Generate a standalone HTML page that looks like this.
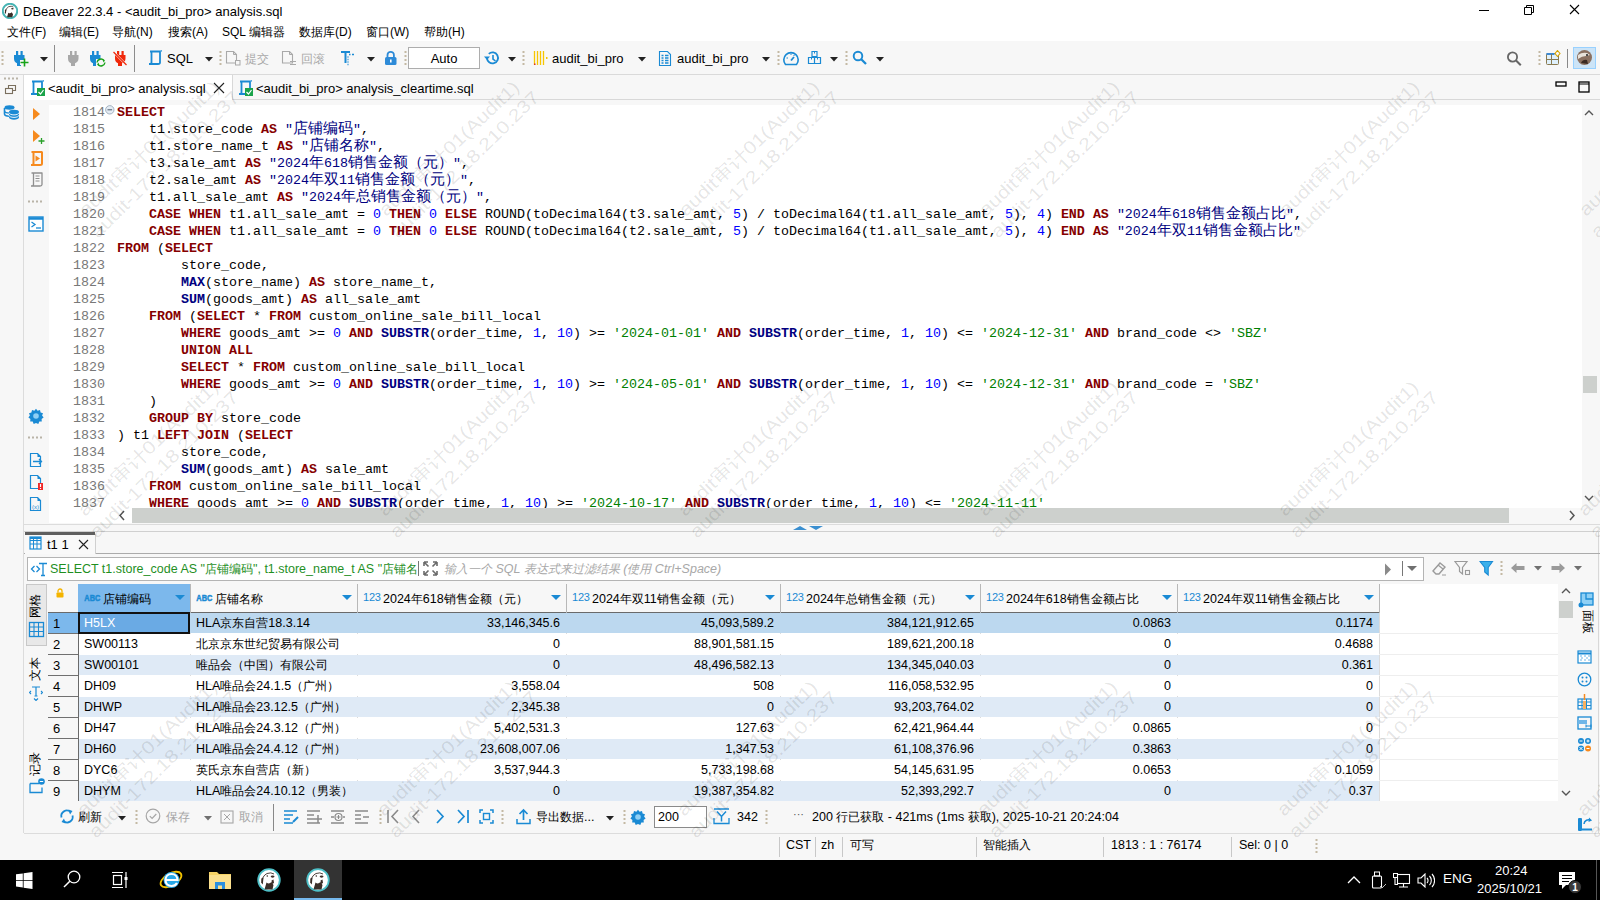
<!DOCTYPE html><html><head><meta charset="utf-8"><style>
*{margin:0;padding:0;box-sizing:border-box}
html,body{width:1600px;height:900px;overflow:hidden;background:#f7f7f7;font-family:"Liberation Sans",sans-serif;font-size:12px;color:#000}
.a{position:absolute}
.ui{font-family:"Liberation Sans",sans-serif;font-size:12px;white-space:nowrap}
.code{font-family:"Liberation Mono",monospace;font-size:13.33px;line-height:17px;white-space:pre;color:#000}
.kw{color:#850000;font-weight:bold}
.fn{color:#000080;font-weight:bold}
.num{color:#0000ff}
.str{color:#008000}
.dq{color:#000080}
.cj{font-size:15px;line-height:0;font-family:"Liberation Sans",sans-serif}
.ln{color:#787878}
.uc{font-size:12px;line-height:0}
.vl{position:absolute;width:1px}
.hl{position:absolute;height:1px}
</style></head><body><div class="a " style="left:0px;top:0px;width:1600px;height:41px;background:#fff"></div><div class="a ui" style="left:23px;top:4px;font-size:13px">DBeaver 22.3.4 - &lt;audit_bi_pro&gt; analysis.sql</div><svg class="a" style="left:2px;top:3px;" width="16" height="16" viewBox="0 0 16 16"><g transform="scale(0.667)"><circle cx="12" cy="12" r="10.8" fill="#fff" stroke="#48b4b4" stroke-width="3"/><path d="M7.5 21.5L9.5 14.5Q12 16.5 14.5 14L16.5 17 15.5 21.5Z" fill="#3a2e28"/><path d="M4.8 15Q5 8 10 5.5Q14 4 17 6" fill="none" stroke="#3a2e28" stroke-width="1.2"/><path d="M4.3 10.5L6.5 9.5 5.8 16.5 4.5 15z" fill="#3a2e28"/><ellipse cx="15.6" cy="8.6" rx="1.9" ry="1.1" fill="#3a2e28"/></g></svg><svg class="a" style="left:1470px;top:0px" width="130" height="22"><path d="M9 10.5h10" stroke="#000" stroke-width="1"/><path d="M54.5 7.5h7v7h-7z M56.5 7.5v-2h7v7h-2" fill="none" stroke="#000" stroke-width="1"/><path d="M100 5l9 9M109 5l-9 9" stroke="#000" stroke-width="1.1"/></svg><div class="a ui" style="left:7px;top:25px;font-size:12px"><span class="uc">文件</span>(F)</div><div class="a ui" style="left:59px;top:25px;font-size:12px"><span class="uc">编辑</span>(E)</div><div class="a ui" style="left:112px;top:25px;font-size:12px"><span class="uc">导航</span>(N)</div><div class="a ui" style="left:168px;top:25px;font-size:12px"><span class="uc">搜索</span>(A)</div><div class="a ui" style="left:222px;top:25px;font-size:12px">SQL <span class="uc">编辑器</span></div><div class="a ui" style="left:299px;top:25px;font-size:12px"><span class="uc">数据库</span>(D)</div><div class="a ui" style="left:366px;top:25px;font-size:12px"><span class="uc">窗口</span>(W)</div><div class="a ui" style="left:424px;top:25px;font-size:12px"><span class="uc">帮助</span>(H)</div><div class="a " style="left:0px;top:41px;width:1600px;height:33px;background:#f7f7f7"></div><div class="a " style="left:0px;top:74px;width:1600px;height:1px;background:#dadada"></div><svg class="a" style="left:1px;top:51px;" width="3" height="15" viewBox="0 0 3 15"><rect x="0.5" y="0" width="2" height="2" fill="#c4b9a4"/><rect x="0.5" y="4" width="2" height="2" fill="#c4b9a4"/><rect x="0.5" y="8" width="2" height="2" fill="#c4b9a4"/><rect x="0.5" y="12" width="2" height="2" fill="#c4b9a4"/></svg><svg class="a" style="left:13px;top:50px;" width="17" height="17" viewBox="0 0 17 17"><g transform="translate(0,1)"><rect x="3" y="0" width="2.2" height="4" fill="#1a8ad4"/><rect x="7.5" y="0" width="2.2" height="4" fill="#1a8ad4"/><path d="M1 4h10.5v3.5c0 2.5-1.5 4-3.5 4.8V15h-4v-2.7C2 11.5 1 10 1 7.5z" fill="#1a8ad4"/></g><rect x="7" y="10" width="9" height="5" fill="#f7f7f7"/><path d="M11.5 8.5v8M7.5 12.5h8" stroke="#18a318" stroke-width="1.6"/></svg><svg class="a" style="left:40px;top:57px;" width="8" height="5" viewBox="0 0 8 5"><path d="M0 0h8L4 4.5z" fill="#222"/></svg><div class="a " style="left:54px;top:45px;width:1px;height:27px;background:#8c8c8c"></div><svg class="a" style="left:67px;top:51px;" width="13" height="16" viewBox="0 0 13 16"><g transform="translate(0,0)"><rect x="3" y="0" width="2.2" height="4" fill="#a8a8a8"/><rect x="7.5" y="0" width="2.2" height="4" fill="#a8a8a8"/><path d="M1 4h10.5v3.5c0 2.5-1.5 4-3.5 4.8V15h-4v-2.7C2 11.5 1 10 1 7.5z" fill="#a8a8a8"/></g></svg><svg class="a" style="left:89px;top:50px;" width="17" height="17" viewBox="0 0 17 17"><g transform="translate(0,1)"><rect x="3" y="0" width="2.2" height="4" fill="#1a8ad4"/><rect x="7.5" y="0" width="2.2" height="4" fill="#1a8ad4"/><path d="M1 4h10.5v3.5c0 2.5-1.5 4-3.5 4.8V15h-4v-2.7C2 11.5 1 10 1 7.5z" fill="#1a8ad4"/></g><rect x="7" y="9" width="10" height="8" fill="#f7f7f7"/><path d="M8 12.5a4 4 0 0 1 7-2M16 12.5a4 4 0 0 1-7 2" fill="none" stroke="#18a318" stroke-width="1.4"/><path d="M13.5 9l2.5 1.5-1.5 2z M10.5 16l-2.5-1.5 1.5-2z" fill="#18a318"/></svg><svg class="a" style="left:113px;top:50px;" width="15" height="17" viewBox="0 0 15 17"><g transform="translate(1,1)"><rect x="3" y="0" width="2.2" height="4" fill="#f0280a"/><rect x="7.5" y="0" width="2.2" height="4" fill="#f0280a"/><path d="M1 4h10.5v3.5c0 2.5-1.5 4-3.5 4.8V15h-4v-2.7C2 11.5 1 10 1 7.5z" fill="#f0280a"/></g><path d="M0.5 2l13 13" stroke="#f7f7f7" stroke-width="2.2"/><path d="M0.5 2l13 13" stroke="#f0280a" stroke-width="1.2"/></svg><div class="a " style="left:134px;top:45px;width:1px;height:27px;background:#8c8c8c"></div><svg class="a" style="left:147px;top:50px;" width="16" height="16" viewBox="0 0 16 16"><path d="M3 1.5h10.5M4.5 1.5v11c0 1-1 1.5-2.5 1.5h9c1 0 2-.5 2-1.5v-11" fill="none" stroke="#1a8ad4" stroke-width="1.8"/><path d="M13.5 1.5l1.2-1" stroke="#1a8ad4" stroke-width="1.4"/></svg><div class="a ui" style="left:167px;top:51px;font-size:13px">SQL</div><svg class="a" style="left:205px;top:57px;" width="8" height="5" viewBox="0 0 8 5"><path d="M0 0h8L4 4.5z" fill="#222"/></svg><svg class="a" style="left:219px;top:51px;" width="3" height="15" viewBox="0 0 3 15"><rect x="0.5" y="0" width="2" height="2" fill="#c4b9a4"/><rect x="0.5" y="4" width="2" height="2" fill="#c4b9a4"/><rect x="0.5" y="8" width="2" height="2" fill="#c4b9a4"/><rect x="0.5" y="12" width="2" height="2" fill="#c4b9a4"/></svg><svg class="a" style="left:225px;top:50px;" width="16" height="17" viewBox="0 0 16 17"><path d="M1.5 1.5h7l3 3v8.5h-10z" fill="none" stroke="#a9a9a9" stroke-width="1.1"/><path d="M8.5 1.5v3h3" fill="none" stroke="#a9a9a9" stroke-width="1"/><rect x="10.5" y="10.5" width="4.5" height="4.5" fill="#f7f7f7" stroke="#a9a9a9"/></svg><div class="a ui" style="left:245px;top:51px;font-size:13px;color:#a9a9a9"><span class="uc">提交</span></div><svg class="a" style="left:281px;top:50px;" width="16" height="17" viewBox="0 0 16 17"><path d="M1.5 1.5h7l3 3v8.5h-10z" fill="none" stroke="#a9a9a9" stroke-width="1.1"/><path d="M8.5 1.5v3h3" fill="none" stroke="#a9a9a9" stroke-width="1"/><path d="M9 11.5h6M9 14.5h6" stroke="#a9a9a9" stroke-width="1"/></svg><div class="a ui" style="left:301px;top:51px;font-size:13px;color:#a9a9a9"><span class="uc">回滚</span></div><svg class="a" style="left:340px;top:50px;" width="17" height="17" viewBox="0 0 17 17"><path d="M1 2h9M5.5 2v11" stroke="#1a8ad4" stroke-width="2"/><path d="M9 4.5h1.5M12 4.5h2M7.5 7h1M7.5 9.5h1M7.5 12h1M7.5 14.5h1" stroke="#1a8ad4" stroke-width="1.5"/></svg><svg class="a" style="left:367px;top:57px;" width="8" height="5" viewBox="0 0 8 5"><path d="M0 0h8L4 4.5z" fill="#222"/></svg><svg class="a" style="left:384px;top:50px;" width="14" height="17" viewBox="0 0 14 17"><path d="M3.5 7V5a3.2 3.2 0 0 1 6.4 0v2" fill="none" stroke="#2e8bd8" stroke-width="1.8"/><rect x="1" y="7" width="11.5" height="8" rx="1.5" fill="#2e8bd8"/><rect x="6" y="9.5" width="1.6" height="3" fill="#fff"/></svg><svg class="a" style="left:404px;top:51px;" width="3" height="15" viewBox="0 0 3 15"><rect x="0.5" y="0" width="2" height="2" fill="#c4b9a4"/><rect x="0.5" y="4" width="2" height="2" fill="#c4b9a4"/><rect x="0.5" y="8" width="2" height="2" fill="#c4b9a4"/><rect x="0.5" y="12" width="2" height="2" fill="#c4b9a4"/></svg><div class="a " style="left:408px;top:47px;width:72px;height:22px;background:#fff;border:1px solid #adadad"></div><div class="a ui" style="left:408px;top:51px;font-size:13px;width:72px;text-align:center">Auto</div><svg class="a" style="left:483px;top:50px;" width="18" height="17" viewBox="0 0 18 17"><path d="M4 8a5.5 5.5 0 1 0 1.8-4.2" fill="none" stroke="#1a8ad4" stroke-width="1.8"/><path d="M1 6.5l3 3.5 3-3.5z" fill="#1a8ad4"/><path d="M10 5v4l2.5 2" fill="none" stroke="#1a8ad4" stroke-width="1.6"/></svg><svg class="a" style="left:508px;top:57px;" width="8" height="5" viewBox="0 0 8 5"><path d="M0 0h8L4 4.5z" fill="#222"/></svg><svg class="a" style="left:522px;top:51px;" width="3" height="15" viewBox="0 0 3 15"><rect x="0.5" y="0" width="2" height="2" fill="#c4b9a4"/><rect x="0.5" y="4" width="2" height="2" fill="#c4b9a4"/><rect x="0.5" y="8" width="2" height="2" fill="#c4b9a4"/><rect x="0.5" y="12" width="2" height="2" fill="#c4b9a4"/></svg><svg class="a" style="left:532px;top:50px;" width="17" height="17" viewBox="0 0 17 17"><path d="M2.5 1v14M5.5 1v14M8.5 1v14M11.5 1v14" stroke="#f7c600" stroke-width="1.3"/><rect x="2" y="13.5" width="1.5" height="1.5" fill="#e0302a"/><rect x="14" y="7" width="1.5" height="2" fill="#f7c600"/></svg><div class="a ui" style="left:552px;top:51px;font-size:13px">audit_bi_pro</div><svg class="a" style="left:638px;top:57px;" width="8" height="5" viewBox="0 0 8 5"><path d="M0 0h8L4 4.5z" fill="#222"/></svg><svg class="a" style="left:658px;top:50px;" width="15" height="17" viewBox="0 0 15 17"><path d="M1.5 1.5h8l3 3v11h-11z" fill="none" stroke="#1a8ad4" stroke-width="1.1"/><path d="M3.5 5.5h2M3.5 8h2M3.5 10.5h2M3.5 13h2M7 5.5h3.5M7 8h3.5M7 10.5h3.5M7 13h3.5" stroke="#1a8ad4" stroke-width="1.4"/></svg><div class="a ui" style="left:677px;top:51px;font-size:13px">audit_bi_pro</div><svg class="a" style="left:762px;top:57px;" width="8" height="5" viewBox="0 0 8 5"><path d="M0 0h8L4 4.5z" fill="#222"/></svg><svg class="a" style="left:777px;top:51px;" width="3" height="15" viewBox="0 0 3 15"><rect x="0.5" y="0" width="2" height="2" fill="#c4b9a4"/><rect x="0.5" y="4" width="2" height="2" fill="#c4b9a4"/><rect x="0.5" y="8" width="2" height="2" fill="#c4b9a4"/><rect x="0.5" y="12" width="2" height="2" fill="#c4b9a4"/></svg><svg class="a" style="left:782px;top:50px;" width="18" height="16" viewBox="0 0 18 16"><path d="M3.5 14.5A7.2 7.2 0 1 1 14.5 14.5Z" fill="none" stroke="#1a8ad4" stroke-width="1.6"/><path d="M9 10.5l3-3.5" stroke="#1a8ad4" stroke-width="1.8"/><path d="M4.5 8h1.5M9 3.5v1.5M12.5 5l-1 1" stroke="#1a8ad4" stroke-width="1"/></svg><svg class="a" style="left:807px;top:50px;" width="15" height="16" viewBox="0 0 15 16"><path d="M5 1.5h5v5H5zM1.5 7.5h6v6h-6zM7.5 7.5h6v6h-6z" fill="none" stroke="#1a8ad4" stroke-width="1.2"/><path d="M7.5 1.5v2M4.5 7.5v2M10.5 7.5v2" stroke="#1a8ad4" stroke-width="1"/></svg><svg class="a" style="left:830px;top:57px;" width="8" height="5" viewBox="0 0 8 5"><path d="M0 0h8L4 4.5z" fill="#222"/></svg><svg class="a" style="left:845px;top:51px;" width="3" height="15" viewBox="0 0 3 15"><rect x="0.5" y="0" width="2" height="2" fill="#c4b9a4"/><rect x="0.5" y="4" width="2" height="2" fill="#c4b9a4"/><rect x="0.5" y="8" width="2" height="2" fill="#c4b9a4"/><rect x="0.5" y="12" width="2" height="2" fill="#c4b9a4"/></svg><svg class="a" style="left:852px;top:50px;" width="16" height="16" viewBox="0 0 16 16"><circle cx="6" cy="6" r="4.3" fill="none" stroke="#1a8ad4" stroke-width="1.9"/><path d="M9 9l5 5" stroke="#1a8ad4" stroke-width="2.3"/></svg><svg class="a" style="left:876px;top:57px;" width="8" height="5" viewBox="0 0 8 5"><path d="M0 0h8L4 4.5z" fill="#222"/></svg><svg class="a" style="left:1505px;top:50px;" width="18" height="18" viewBox="0 0 18 18"><circle cx="7.5" cy="7" r="4.6" fill="none" stroke="#666" stroke-width="1.8"/><path d="M10.8 10.3l5 5" stroke="#666" stroke-width="2"/></svg><svg class="a" style="left:1538px;top:51px;" width="3" height="15" viewBox="0 0 3 15"><rect x="0.5" y="0" width="2" height="2" fill="#c4b9a4"/><rect x="0.5" y="4" width="2" height="2" fill="#c4b9a4"/><rect x="0.5" y="8" width="2" height="2" fill="#c4b9a4"/><rect x="0.5" y="12" width="2" height="2" fill="#c4b9a4"/></svg><svg class="a" style="left:1545px;top:50px;" width="17" height="17" viewBox="0 0 17 17"><rect x="1.5" y="3.5" width="12" height="11" rx="1" fill="#dff0fb" stroke="#8a7a50" stroke-width="1"/><path d="M1.5 4h8" stroke="#3d8ad4" stroke-width="2"/><path d="M6.5 4v10.5M1.5 9.5h12" stroke="#8a7a50" stroke-width="1"/><path d="M12.5 0.5l2.5 3-2.5 3-2.5-3z" fill="#f7f7f7" stroke="#d6a400" stroke-width="1.1"/></svg><div class="a " style="left:1567px;top:49px;width:1px;height:19px;background:#888"></div><div class="a " style="left:1573px;top:47px;width:23px;height:22px;background:#cce4f7;border:1px solid #99d1ff"></div><svg class="a" style="left:1576px;top:49px;" width="17" height="17" viewBox="0 0 17 17"><circle cx="8.5" cy="8.5" r="7.5" fill="#8a7060"/><path d="M2 6q4-3 9-2l3 2-4 1q-4 0-8 3z" fill="#e8e2da"/><circle cx="11" cy="6" r="1" fill="#222"/><path d="M5 14q2-4 6-3l1 4z" fill="#3a2a22"/></svg><div class="a " style="left:0px;top:75px;width:23px;height:760px;background:#f7f7f7"></div><div class="a " style="left:23px;top:75px;width:1px;height:758px;background:#dcdcdc"></div><svg class="a" style="left:4px;top:77px;" width="16" height="3" viewBox="0 0 16 3"><rect x="0" y="0.5" width="2" height="2" fill="#b9b4a8"/><rect x="4" y="0.5" width="2" height="2" fill="#b9b4a8"/><rect x="8" y="0.5" width="2" height="2" fill="#b9b4a8"/><rect x="12" y="0.5" width="2" height="2" fill="#b9b4a8"/></svg><svg class="a" style="left:4px;top:83px;" width="14" height="12" viewBox="0 0 14 12"><rect x="1.5" y="5.5" width="7" height="5" fill="none" stroke="#7a6f5e" stroke-width="1.1"/><path d="M4.5 5.5v-3h7v5h-3" fill="none" stroke="#7a6f5e" stroke-width="1.1"/></svg><svg class="a" style="left:3px;top:104px;" width="17" height="16" viewBox="0 0 17 16"><ellipse cx="6.5" cy="3.5" rx="5" ry="2.2" fill="#1a8ad4"/><path d="M1.5 4v6c0 1.2 2.2 2.2 5 2.2" fill="none" stroke="#1a8ad4" stroke-width="1.6"/><path d="M1.5 6.8c0 1.2 2.2 2.2 5 2.2" fill="none" stroke="#1a8ad4" stroke-width="1.3"/><ellipse cx="11" cy="8" rx="5" ry="2.2" fill="#1a8ad4"/><path d="M6 8.5v5c0 1.2 2.2 2.2 5 2.2s5-1 5-2.2v-5" fill="#1a8ad4"/><path d="M6 11.2c0 1.2 2.2 2.2 5 2.2s5-1 5-2.2" fill="none" stroke="#fff" stroke-width="0.9"/><path d="M6 8.7c0 1.2 2.2 2.2 5 2.2s5-1 5-2.2" fill="none" stroke="#fff" stroke-width="0.9"/></svg><div class="a " style="left:24px;top:75px;width:1576px;height:25px;background:#f7f7f7"></div><div class="a " style="left:24px;top:99px;width:1576px;height:1px;background:#d8d8d8"></div><div class="a " style="left:24px;top:75px;width:208px;height:25px;background:#fff"></div><div class="a " style="left:232px;top:75px;width:1px;height:25px;background:#d8d8d8"></div><div class="a ui" style="left:48px;top:81px;font-size:13px">&lt;audit_bi_pro&gt; analysis.sql</div><div class="a ui" style="left:256px;top:81px;font-size:13px">&lt;audit_bi_pro&gt; analysis_cleartime.sql</div><svg class="a" style="left:29px;top:80px;" width="17" height="17" viewBox="0 0 17 17"><path d="M3 1.5h10.5M4.5 1.5v11c0 1-1 1.5-2.5 1.5h9c1 0 2-.5 2-1.5v-11" fill="none" stroke="#1a8ad4" stroke-width="1.8"/><path d="M13.5 1.5l1.2-1" stroke="#1a8ad4" stroke-width="1.4"/><rect x="8" y="8" width="8" height="8" fill="#1aa34a"/><path d="M9.5 12l2 2 3-4" fill="none" stroke="#fff" stroke-width="1.2"/></svg><svg class="a" style="left:237px;top:80px;" width="17" height="17" viewBox="0 0 17 17"><path d="M3 1.5h10.5M4.5 1.5v11c0 1-1 1.5-2.5 1.5h9c1 0 2-.5 2-1.5v-11" fill="none" stroke="#1a8ad4" stroke-width="1.8"/><path d="M13.5 1.5l1.2-1" stroke="#1a8ad4" stroke-width="1.4"/><rect x="8" y="8" width="8" height="8" fill="#1aa34a"/><path d="M9.5 12l2 2 3-4" fill="none" stroke="#fff" stroke-width="1.2"/></svg><svg class="a" style="left:213px;top:82px;" width="12" height="12" viewBox="0 0 12 12"><path d="M1 1l10 10M11 1L1 11" stroke="#222" stroke-width="1.1"/></svg><svg class="a" style="left:1555px;top:81px;" width="12" height="6" viewBox="0 0 12 6"><rect x="1" y="1" width="10" height="4" fill="none" stroke="#000" stroke-width="1.3"/></svg><svg class="a" style="left:1578px;top:81px;" width="12" height="12" viewBox="0 0 12 12"><rect x="1" y="1" width="10" height="10" fill="none" stroke="#000" stroke-width="1.3"/><path d="M1 3h10" stroke="#000" stroke-width="1"/></svg><div class="a " style="left:24px;top:100px;width:1576px;height:424px;background:#f7f7f7"></div><div class="a " style="left:24px;top:100px;width:25px;height:424px;background:#f7f7f7"></div><div class="a " style="left:49px;top:105px;width:1533px;height:403px;background:#fff"></div><svg class="a" style="left:31px;top:107px;" width="10" height="14" viewBox="0 0 10 14"><path d="M2 1l7 6-7 6z" fill="#f68a1e"/></svg><svg class="a" style="left:31px;top:129px;" width="14" height="16" viewBox="0 0 14 16"><path d="M2 1l7 6-7 6z" fill="#f68a1e"/><path d="M10.5 9v6M7.5 12h6" stroke="#28a028" stroke-width="1.3"/></svg><svg class="a" style="left:28px;top:150px;" width="17" height="17" viewBox="0 0 17 17"><path d="M3.5 2h11M5.5 2v11.5c0 1-1 1.5-2.5 1.5h9c1 0 2-.5 2-1.5V2" fill="none" stroke="#f68a1e" stroke-width="2"/><path d="M7.5 5.5l4.5 3-4.5 3z" fill="#f68a1e"/></svg><svg class="a" style="left:28px;top:171px;" width="17" height="17" viewBox="0 0 17 17"><path d="M3.5 2h11M5.5 2v11.5c0 1-1 1.5-2.5 1.5h9c1 0 2-.5 2-1.5V2" fill="none" stroke="#8f8f8f" stroke-width="1.3"/><path d="M7.5 5h4M7.5 7.5h4M7.5 10h4" stroke="#8f8f8f" stroke-width="1"/></svg><svg class="a" style="left:28px;top:200px;" width="16" height="3" viewBox="0 0 16 3"><rect x="0" y="0.5" width="2" height="2" fill="#b9b4a8"/><rect x="4" y="0.5" width="2" height="2" fill="#b9b4a8"/><rect x="8" y="0.5" width="2" height="2" fill="#b9b4a8"/><rect x="12" y="0.5" width="2" height="2" fill="#b9b4a8"/></svg><svg class="a" style="left:28px;top:216px;" width="16" height="16" viewBox="0 0 16 16"><rect x="1" y="1" width="14" height="14" fill="#fff" stroke="#1a8ad4" stroke-width="1.4"/><path d="M1 2.5h14" stroke="#1a8ad4" stroke-width="2.5"/><path d="M3.5 6l3.5 2.5-3.5 2.5" fill="none" stroke="#1a8ad4" stroke-width="1.3"/><path d="M8 12h5" stroke="#1a8ad4" stroke-width="1.3"/></svg><svg class="a" style="left:28px;top:408px;" width="16" height="16" viewBox="0 0 16 16"><path d="M8 0.8l1.6 1.9 2.4-.6.6 2.4 2.4.8-.9 2.3 1.5 2-2 1.4.2 2.5-2.5.1-1 2.3-2.3-1-2.3 1-1-2.3-2.5-.1.2-2.5-2-1.4 1.5-2-.9-2.3 2.4-.8.6-2.4 2.4.6z" fill="#1a8ad4"/><circle cx="8" cy="8" r="2.8" fill="#8fd0f5"/></svg><svg class="a" style="left:28px;top:436px;" width="16" height="3" viewBox="0 0 16 3"><rect x="0" y="0.5" width="2" height="2" fill="#b9b4a8"/><rect x="4" y="0.5" width="2" height="2" fill="#b9b4a8"/><rect x="8" y="0.5" width="2" height="2" fill="#b9b4a8"/><rect x="12" y="0.5" width="2" height="2" fill="#b9b4a8"/></svg><svg class="a" style="left:29px;top:452px;" width="15" height="17" viewBox="0 0 15 17"><path d="M1.5 1.5h7l3 3v10h-10z" fill="none" stroke="#1a8ad4" stroke-width="1.2"/><path d="M8.5 1v4h3.5" fill="#1a8ad4"/><path d="M4 9.5h8M10 7l2.5 2.5-2.5 2.5" fill="none" stroke="#1a8ad4" stroke-width="1.3"/></svg><svg class="a" style="left:29px;top:474px;" width="16" height="17" viewBox="0 0 16 17"><path d="M1.5 1.5h7l3 3v10h-10z" fill="none" stroke="#1a8ad4" stroke-width="1.2"/><path d="M8.5 1v4h3.5" fill="#1a8ad4"/><rect x="9" y="9" width="5" height="7" fill="#f02a2a"/><path d="M11.5 10v3M11.5 14v1" stroke="#fff" stroke-width="1.2"/></svg><svg class="a" style="left:29px;top:496px;" width="15" height="17" viewBox="0 0 15 17"><path d="M1.5 1.5h7l3 3v10h-10z" fill="none" stroke="#1a8ad4" stroke-width="1.2"/><path d="M8.5 1v4h3.5" fill="#1a8ad4"/><text x="6.5" y="12.5" font-size="6" font-family="Liberation Sans" fill="#1a8ad4" text-anchor="middle">(x)</text></svg><div class="a " style="left:49px;top:105px;width:1533px;height:403px;overflow:hidden"><div class="a code ln" style="left:24px;top:-1px">1814</div><div class="a code" style="left:68px;top:-1px"><span class="kw">SELECT</span></div><div class="a code ln" style="left:24px;top:16px">1815</div><div class="a code" style="left:68px;top:16px">    t1.store_code <span class="kw">AS</span> <span class="dq">"<span class="cj">店铺编码</span>"</span>,</div><div class="a code ln" style="left:24px;top:33px">1816</div><div class="a code" style="left:68px;top:33px">    t1.store_name_t <span class="kw">AS</span> <span class="dq">"<span class="cj">店铺名称</span>"</span>,</div><div class="a code ln" style="left:24px;top:50px">1817</div><div class="a code" style="left:68px;top:50px">    t3.sale_amt <span class="kw">AS</span> <span class="dq">"2024<span class="cj">年</span>618<span class="cj">销售金额（元）</span>"</span>,</div><div class="a code ln" style="left:24px;top:67px">1818</div><div class="a code" style="left:68px;top:67px">    t2.sale_amt <span class="kw">AS</span> <span class="dq">"2024<span class="cj">年双</span>11<span class="cj">销售金额（元）</span>"</span>,</div><div class="a code ln" style="left:24px;top:84px">1819</div><div class="a code" style="left:68px;top:84px">    t1.all_sale_amt <span class="kw">AS</span> <span class="dq">"2024<span class="cj">年总销售金额（元）</span>"</span>,</div><div class="a code ln" style="left:24px;top:101px">1820</div><div class="a code" style="left:68px;top:101px">    <span class="kw">CASE</span> <span class="kw">WHEN</span> t1.all_sale_amt = <span class="num">0</span> <span class="kw">THEN</span> <span class="num">0</span> <span class="kw">ELSE</span> ROUND(toDecimal64(t3.sale_amt, <span class="num">5</span>) / toDecimal64(t1.all_sale_amt, <span class="num">5</span>), <span class="num">4</span>) <span class="kw">END</span> <span class="kw">AS</span> <span class="dq">"2024<span class="cj">年</span>618<span class="cj">销售金额占比</span>"</span>,</div><div class="a code ln" style="left:24px;top:118px">1821</div><div class="a code" style="left:68px;top:118px">    <span class="kw">CASE</span> <span class="kw">WHEN</span> t1.all_sale_amt = <span class="num">0</span> <span class="kw">THEN</span> <span class="num">0</span> <span class="kw">ELSE</span> ROUND(toDecimal64(t2.sale_amt, <span class="num">5</span>) / toDecimal64(t1.all_sale_amt, <span class="num">5</span>), <span class="num">4</span>) <span class="kw">END</span> <span class="kw">AS</span> <span class="dq">"2024<span class="cj">年双</span>11<span class="cj">销售金额占比</span>"</span></div><div class="a code ln" style="left:24px;top:135px">1822</div><div class="a code" style="left:68px;top:135px"><span class="kw">FROM</span> (<span class="kw">SELECT</span></div><div class="a code ln" style="left:24px;top:152px">1823</div><div class="a code" style="left:68px;top:152px">        store_code,</div><div class="a code ln" style="left:24px;top:169px">1824</div><div class="a code" style="left:68px;top:169px">        <span class="fn">MAX</span>(store_name) <span class="kw">AS</span> store_name_t,</div><div class="a code ln" style="left:24px;top:186px">1825</div><div class="a code" style="left:68px;top:186px">        <span class="fn">SUM</span>(goods_amt) <span class="kw">AS</span> all_sale_amt</div><div class="a code ln" style="left:24px;top:203px">1826</div><div class="a code" style="left:68px;top:203px">    <span class="kw">FROM</span> (<span class="kw">SELECT</span> * <span class="kw">FROM</span> custom_online_sale_bill_local</div><div class="a code ln" style="left:24px;top:220px">1827</div><div class="a code" style="left:68px;top:220px">        <span class="kw">WHERE</span> goods_amt &gt;= <span class="num">0</span> <span class="kw">AND</span> <span class="fn">SUBSTR</span>(order_time, <span class="num">1</span>, <span class="num">10</span>) &gt;= <span class="str">'2024-01-01'</span> <span class="kw">AND</span> <span class="fn">SUBSTR</span>(order_time, <span class="num">1</span>, <span class="num">10</span>) &lt;= <span class="str">'2024-12-31'</span> <span class="kw">AND</span> brand_code &lt;&gt; <span class="str">'SBZ'</span></div><div class="a code ln" style="left:24px;top:237px">1828</div><div class="a code" style="left:68px;top:237px">        <span class="kw">UNION</span> <span class="kw">ALL</span></div><div class="a code ln" style="left:24px;top:254px">1829</div><div class="a code" style="left:68px;top:254px">        <span class="kw">SELECT</span> * <span class="kw">FROM</span> custom_online_sale_bill_local</div><div class="a code ln" style="left:24px;top:271px">1830</div><div class="a code" style="left:68px;top:271px">        <span class="kw">WHERE</span> goods_amt &gt;= <span class="num">0</span> <span class="kw">AND</span> <span class="fn">SUBSTR</span>(order_time, <span class="num">1</span>, <span class="num">10</span>) &gt;= <span class="str">'2024-05-01'</span> <span class="kw">AND</span> <span class="fn">SUBSTR</span>(order_time, <span class="num">1</span>, <span class="num">10</span>) &lt;= <span class="str">'2024-12-31'</span> <span class="kw">AND</span> brand_code = <span class="str">'SBZ'</span></div><div class="a code ln" style="left:24px;top:288px">1831</div><div class="a code" style="left:68px;top:288px">    )</div><div class="a code ln" style="left:24px;top:305px">1832</div><div class="a code" style="left:68px;top:305px">    <span class="kw">GROUP</span> <span class="kw">BY</span> store_code</div><div class="a code ln" style="left:24px;top:322px">1833</div><div class="a code" style="left:68px;top:322px">) t1 <span class="kw">LEFT</span> <span class="kw">JOIN</span> (<span class="kw">SELECT</span></div><div class="a code ln" style="left:24px;top:339px">1834</div><div class="a code" style="left:68px;top:339px">        store_code,</div><div class="a code ln" style="left:24px;top:356px">1835</div><div class="a code" style="left:68px;top:356px">        <span class="fn">SUM</span>(goods_amt) <span class="kw">AS</span> sale_amt</div><div class="a code ln" style="left:24px;top:373px">1836</div><div class="a code" style="left:68px;top:373px">    <span class="kw">FROM</span> custom_online_sale_bill_local</div><div class="a code ln" style="left:24px;top:390px">1837</div><div class="a code" style="left:68px;top:390px">    <span class="kw">WHERE</span> goods_amt &gt;= <span class="num">0</span> <span class="kw">AND</span> <span class="fn">SUBSTR</span>(order_time, <span class="num">1</span>, <span class="num">10</span>) &gt;= <span class="str">'2024-10-17'</span> <span class="kw">AND</span> <span class="fn">SUBSTR</span>(order_time, <span class="num">1</span>, <span class="num">10</span>) &lt;= <span class="str">'2024-11-11'</span></div></div><svg class="a" style="left:105px;top:105px;" width="10" height="10" viewBox="0 0 10 10"><circle cx="4.8" cy="4.8" r="4.2" fill="#e4ecf4" stroke="#9aa8b8" stroke-width="0.9"/><path d="M2.5 4.8h4.6" stroke="#4a5a6a" stroke-width="1"/></svg><div class="a " style="left:1582px;top:104px;width:16px;height:404px;background:#f7f7f7"></div><div class="a " style="left:1583px;top:376px;width:14px;height:17px;background:#cdd0cd"></div><div class="a " style="left:49px;top:508px;width:1533px;height:15px;background:#f7f7f7"></div><div class="a " style="left:49px;top:508px;width:83px;height:15px;background:#fff"></div><div class="a " style="left:132px;top:508px;width:1377px;height:15px;background:#cdd0cd"></div><div class="a " style="left:24px;top:524px;width:1576px;height:1px;background:#dcdcdc"></div><div class="a " style="left:24px;top:531px;width:1576px;height:1px;background:#d0d0d0"></div><div class="a " style="left:24px;top:532px;width:1576px;height:301px;background:#f7f7f7"></div><div class="a " style="left:1598px;top:532px;width:1px;height:301px;background:#d8d8d8"></div><div class="a " style="left:24px;top:553px;width:1576px;height:1px;background:#ababab"></div><div class="a " style="left:25px;top:532px;width:70px;height:22px;background:#f9f9f9;border-top:3px solid #5f5f5f"></div><div class="a " style="left:95px;top:534px;width:1px;height:20px;background:#d0d0d0"></div><div class="a ui" style="left:47px;top:537px;font-size:13px">t1 1</div><svg class="a" style="left:29px;top:536px;" width="13" height="14" viewBox="0 0 13 14"><rect x="1" y="1" width="11" height="12" fill="none" stroke="#1a8ad4" stroke-width="1.2"/><path d="M1 4.5h11M1 8h11M4.5 1v12M8 1v12" stroke="#1a8ad4" stroke-width="1"/><path d="M1 1h11v2H1z" fill="#1a8ad4"/></svg><svg class="a" style="left:78px;top:539px;" width="11" height="11" viewBox="0 0 11 11"><path d="M1 1l9 9M10 1L1 10" stroke="#222" stroke-width="1.1"/></svg><svg class="a" style="left:793px;top:525px;" width="30" height="6" viewBox="0 0 30 6"><path d="M0 5l7-4 7 4z" fill="#3a8fd0"/><path d="M16 1h14l-7 4z" fill="#3a8fd0"/></svg><div class="a " style="left:27px;top:557px;width:1397px;height:24px;background:#fff;border:1px solid #b4b4b4"></div><svg class="a" style="left:30px;top:561px;" width="18" height="16" viewBox="0 0 18 16"><path d="M4.5 5l-3 3 3 3M6.5 5l3 3-3 3" fill="none" stroke="#1a8ad4" stroke-width="1.3"/><path d="M9 2.5h8M13 2.5v12M11 14.5h4" stroke="#1a8ad4" stroke-width="1.3"/></svg><div class="a ui" style="left:50px;top:562px;color:#1f8f1f;font-size:12.5px">SELECT t1.store_code AS "<span class="uc">店铺编码</span>", t1.store_name_t AS "<span class="uc">店铺名</span></div><div class="a " style="left:418px;top:561px;width:1px;height:15px;background:#777"></div><svg class="a" style="left:422px;top:560px;" width="17" height="17" viewBox="0 0 17 17"><path d="M2 2l4.5 4.5M2 2h4M2 2v4M15 2l-4.5 4.5M15 2h-4M15 2v4M2 15l4.5-4.5M2 15h4M2 15v-4M15 15l-4.5-4.5M15 15h-4M15 15v-4" fill="none" stroke="#6a6a6a" stroke-width="1.6"/></svg><div class="a ui" style="left:444px;top:562px;color:#a8a8a8;font-style:italic;font-size:12.5px"><span class="uc">输入一个</span> SQL <span class="uc">表达式来过滤结果</span> (<span class="uc">使用</span> Ctrl+Space)</div><svg class="a" style="left:1384px;top:563px;" width="8" height="13" viewBox="0 0 8 13"><path d="M1 0.5l6 6-6 6z" fill="#8a8a8a"/></svg><div class="a " style="left:1402px;top:561px;width:1px;height:15px;background:#777"></div><svg class="a" style="left:1407px;top:566px;" width="11" height="6" viewBox="0 0 11 6"><path d="M0 0h10l-5 5z" fill="#707070"/></svg><svg class="a" style="left:1431px;top:560px;" width="18" height="17" viewBox="0 0 18 17"><path d="M2 11l7-8 5 4-6 7H5z" fill="none" stroke="#9a9a9a" stroke-width="1.4"/><path d="M7 5l5 4" stroke="#9a9a9a" stroke-width="1.3"/><path d="M11 15h4" stroke="#9a9a9a" stroke-width="1"/></svg><svg class="a" style="left:1454px;top:560px;" width="18" height="17" viewBox="0 0 18 17"><path d="M1 1.5h12L8.5 7.5V14L5.5 11.5V7.5z" fill="none" stroke="#9a9a9a" stroke-width="1.2"/><rect x="11.5" y="10.5" width="4" height="4" fill="none" stroke="#9a9a9a" stroke-width="1.1"/></svg><svg class="a" style="left:1479px;top:560px;" width="15" height="17" viewBox="0 0 15 17"><path d="M1 1.5h12.5L9.2 7.5V15L5.7 12V7.5z" fill="#3bb0ea" stroke="#1a8ad4" stroke-width="1.1"/></svg><svg class="a" style="left:1500px;top:561px;" width="3" height="15" viewBox="0 0 3 15"><rect x="0.5" y="0" width="2" height="2" fill="#c4b9a4"/><rect x="0.5" y="4" width="2" height="2" fill="#c4b9a4"/><rect x="0.5" y="8" width="2" height="2" fill="#c4b9a4"/><rect x="0.5" y="12" width="2" height="2" fill="#c4b9a4"/></svg><svg class="a" style="left:1510px;top:562px;" width="16" height="12" viewBox="0 0 16 12"><path d="M1 6l5.5-5v3h8v4h-8v3z" fill="#9a9a9a"/></svg><svg class="a" style="left:1534px;top:566px;" width="8" height="5" viewBox="0 0 8 5"><path d="M0 0h8L4 4.5z" fill="#707070"/></svg><svg class="a" style="left:1550px;top:562px;" width="16" height="12" viewBox="0 0 16 12"><path d="M15 6l-5.5-5v3h-8v4h8v3z" fill="#9a9a9a"/></svg><svg class="a" style="left:1574px;top:566px;" width="8" height="5" viewBox="0 0 8 5"><path d="M0 0h8L4 4.5z" fill="#707070"/></svg><div class="a " style="left:26px;top:584px;width:21px;height:62px;background:#e8e8e8;border:1px solid #c8c8c8"></div><div class="a ui" style="left:28px;top:618px;font-size:12.5px;transform:rotate(-90deg);transform-origin:0 0"><span class="uc">网格</span></div><svg class="a" style="left:28px;top:621px;" width="17" height="17" viewBox="0 0 17 17"><rect x="1.5" y="1.5" width="14" height="14" fill="none" stroke="#1a8ad4" stroke-width="1.3"/><path d="M1.5 6h14M1.5 10.5h14M6 1.5v14M10.5 1.5v14" stroke="#1a8ad4" stroke-width="1.1"/></svg><div class="a ui" style="left:28px;top:681px;font-size:12.5px;transform:rotate(-90deg);transform-origin:0 0"><span class="uc">文本</span></div><svg class="a" style="left:29px;top:684px;" width="14" height="17" viewBox="0 0 14 17"><path d="M3 3h8M7 3v9M5.5 12h3" stroke="#1a8ad4" stroke-width="1.2" fill="none"/><path d="M2 7l-1.5 1.5L2 10M12 7l1.5 1.5L12 10" stroke="#1a8ad4" stroke-width="1.1" fill="none"/><path d="M5 14.5l2 2 2-2" stroke="#1a8ad4" stroke-width="1.1" fill="none"/></svg><div class="a ui" style="left:28px;top:776px;font-size:12.5px;transform:rotate(-90deg);transform-origin:0 0"><span class="uc">记录</span></div><svg class="a" style="left:28px;top:777px;" width="18" height="18" viewBox="0 0 18 18"><path d="M2 6.5h9M2 6.5v9h12v-5" fill="none" stroke="#1a8ad4" stroke-width="1.3"/><circle cx="13.5" cy="4.5" r="3.3" fill="#1a8ad4"/><path d="M11.8 4.5h3.4" stroke="#fff" stroke-width="1"/></svg><div class="a " style="left:48px;top:584px;width:1510px;height:217px;background:#fff"></div><div class="a " style="left:48px;top:584px;width:1331px;height:28px;background:#f7f7f7"></div><div class="a " style="left:78px;top:584px;width:112px;height:28px;background:#7cb8ec"></div><div class="a " style="left:48px;top:612px;width:1331px;height:1px;background:#6a6a6a"></div><svg class="a" style="left:56px;top:588px;" width="8" height="10" viewBox="0 0 8 10"><path d="M2 4.5V3a2 2 0 0 1 4 0v1.5" fill="none" stroke="#f4b400" stroke-width="1.3"/><rect x="0.5" y="4.5" width="7" height="5" rx="0.8" fill="#f4b400"/></svg><div class="a " style="left:190px;top:584px;width:1px;height:29px;background:#b8b8b8"></div><div class="a " style="left:190px;top:613px;width:1px;height:188px;background:#dcdcdc"></div><svg class="a" style="left:84px;top:593px;" width="17" height="9" viewBox="0 0 17 9"><text x="0.3" y="8" font-size="9.5" font-weight="bold" font-family="Liberation Sans" fill="#1a8ad4" stroke="#1a8ad4" stroke-width="0.5" textLength="16" lengthAdjust="spacingAndGlyphs">ABC</text></svg><div class="a ui" style="left:103px;top:592px;font-size:12.5px"><span class="uc">店铺编码</span></div><svg class="a" style="left:175px;top:595px;" width="12" height="7" viewBox="0 0 12 7"><path d="M0 0h10L5 5z" fill="#1a8ad4"/></svg><div class="a " style="left:357px;top:584px;width:1px;height:29px;background:#b8b8b8"></div><div class="a " style="left:357px;top:613px;width:1px;height:188px;background:#dcdcdc"></div><svg class="a" style="left:196px;top:593px;" width="17" height="9" viewBox="0 0 17 9"><text x="0.3" y="8" font-size="9.5" font-weight="bold" font-family="Liberation Sans" fill="#1a8ad4" stroke="#1a8ad4" stroke-width="0.5" textLength="16" lengthAdjust="spacingAndGlyphs">ABC</text></svg><div class="a ui" style="left:215px;top:592px;font-size:12.5px"><span class="uc">店铺名称</span></div><svg class="a" style="left:342px;top:595px;" width="12" height="7" viewBox="0 0 12 7"><path d="M0 0h10L5 5z" fill="#1a8ad4"/></svg><div class="a " style="left:566px;top:584px;width:1px;height:29px;background:#b8b8b8"></div><div class="a " style="left:566px;top:613px;width:1px;height:188px;background:#dcdcdc"></div><div class="a ui" style="left:363px;top:591px;color:#1a8ad4;font-size:11px;letter-spacing:-0.2px">123</div><div class="a ui" style="left:383px;top:592px;font-size:12.5px">2024<span class="uc">年</span>618<span class="uc">销售金额（元）</span></div><svg class="a" style="left:551px;top:595px;" width="12" height="7" viewBox="0 0 12 7"><path d="M0 0h10L5 5z" fill="#1a8ad4"/></svg><div class="a " style="left:780px;top:584px;width:1px;height:29px;background:#b8b8b8"></div><div class="a " style="left:780px;top:613px;width:1px;height:188px;background:#dcdcdc"></div><div class="a ui" style="left:572px;top:591px;color:#1a8ad4;font-size:11px;letter-spacing:-0.2px">123</div><div class="a ui" style="left:592px;top:592px;font-size:12.5px">2024<span class="uc">年双</span>11<span class="uc">销售金额（元）</span></div><svg class="a" style="left:765px;top:595px;" width="12" height="7" viewBox="0 0 12 7"><path d="M0 0h10L5 5z" fill="#1a8ad4"/></svg><div class="a " style="left:980px;top:584px;width:1px;height:29px;background:#b8b8b8"></div><div class="a " style="left:980px;top:613px;width:1px;height:188px;background:#dcdcdc"></div><div class="a ui" style="left:786px;top:591px;color:#1a8ad4;font-size:11px;letter-spacing:-0.2px">123</div><div class="a ui" style="left:806px;top:592px;font-size:12.5px">2024<span class="uc">年总销售金额（元）</span></div><svg class="a" style="left:965px;top:595px;" width="12" height="7" viewBox="0 0 12 7"><path d="M0 0h10L5 5z" fill="#1a8ad4"/></svg><div class="a " style="left:1177px;top:584px;width:1px;height:29px;background:#b8b8b8"></div><div class="a " style="left:1177px;top:613px;width:1px;height:188px;background:#dcdcdc"></div><div class="a ui" style="left:986px;top:591px;color:#1a8ad4;font-size:11px;letter-spacing:-0.2px">123</div><div class="a ui" style="left:1006px;top:592px;font-size:12.5px">2024<span class="uc">年</span>618<span class="uc">销售金额占比</span></div><svg class="a" style="left:1162px;top:595px;" width="12" height="7" viewBox="0 0 12 7"><path d="M0 0h10L5 5z" fill="#1a8ad4"/></svg><div class="a " style="left:1379px;top:584px;width:1px;height:29px;background:#b8b8b8"></div><div class="a " style="left:1379px;top:613px;width:1px;height:188px;background:#dcdcdc"></div><div class="a ui" style="left:1183px;top:591px;color:#1a8ad4;font-size:11px;letter-spacing:-0.2px">123</div><div class="a ui" style="left:1203px;top:592px;font-size:12.5px">2024<span class="uc">年双</span>11<span class="uc">销售金额占比</span></div><svg class="a" style="left:1364px;top:595px;" width="12" height="7" viewBox="0 0 12 7"><path d="M0 0h10L5 5z" fill="#1a8ad4"/></svg><div class="a " style="left:78px;top:613px;width:1301px;height:20px;background:#bcd8ef"></div><div class="a " style="left:1379px;top:633px;width:179px;height:1px;background:#eeeeee"></div><div class="a " style="left:48px;top:613px;width:30px;height:20px;background:#7cb8ec"></div><div class="a " style="left:48px;top:633px;width:30px;height:1px;background:#707070"></div><div class="a " style="left:78px;top:613px;width:1px;height:21px;background:#6a6a6a"></div><div class="a ui" style="left:53px;top:616px;font-size:13px">1</div><div class="a ui" style="left:84px;top:616px;font-size:12.5px">H5LX</div><div class="a ui" style="left:196px;top:616px;font-size:12.5px">HLA<span class="uc">京东自营</span>18.3.14</div><div class="a ui" style="left:357px;top:616px;font-size:12.5px;width:203px;text-align:right">33,146,345.6</div><div class="a ui" style="left:566px;top:616px;font-size:12.5px;width:208px;text-align:right">45,093,589.2</div><div class="a ui" style="left:780px;top:616px;font-size:12.5px;width:194px;text-align:right">384,121,912.65</div><div class="a ui" style="left:980px;top:616px;font-size:12.5px;width:191px;text-align:right">0.0863</div><div class="a ui" style="left:1177px;top:616px;font-size:12.5px;width:196px;text-align:right">0.1174</div><div class="a " style="left:78px;top:634px;width:1301px;height:20px;background:#fff"></div><div class="a " style="left:1379px;top:654px;width:179px;height:1px;background:#eeeeee"></div><div class="a " style="left:48px;top:634px;width:30px;height:20px;background:#f7f7f7"></div><div class="a " style="left:48px;top:654px;width:30px;height:1px;background:#707070"></div><div class="a " style="left:78px;top:634px;width:1px;height:21px;background:#6a6a6a"></div><div class="a ui" style="left:53px;top:637px;font-size:13px">2</div><div class="a ui" style="left:84px;top:637px;font-size:12.5px">SW00113</div><div class="a ui" style="left:196px;top:637px;font-size:12.5px"><span class="uc">北京京东世纪贸易有限公司</span></div><div class="a ui" style="left:357px;top:637px;font-size:12.5px;width:203px;text-align:right">0</div><div class="a ui" style="left:566px;top:637px;font-size:12.5px;width:208px;text-align:right">88,901,581.15</div><div class="a ui" style="left:780px;top:637px;font-size:12.5px;width:194px;text-align:right">189,621,200.18</div><div class="a ui" style="left:980px;top:637px;font-size:12.5px;width:191px;text-align:right">0</div><div class="a ui" style="left:1177px;top:637px;font-size:12.5px;width:196px;text-align:right">0.4688</div><div class="a " style="left:78px;top:655px;width:1301px;height:20px;background:#dfeaf6"></div><div class="a " style="left:1379px;top:675px;width:179px;height:1px;background:#eeeeee"></div><div class="a " style="left:48px;top:655px;width:30px;height:20px;background:#f7f7f7"></div><div class="a " style="left:48px;top:675px;width:30px;height:1px;background:#707070"></div><div class="a " style="left:78px;top:655px;width:1px;height:21px;background:#6a6a6a"></div><div class="a ui" style="left:53px;top:658px;font-size:13px">3</div><div class="a ui" style="left:84px;top:658px;font-size:12.5px">SW00101</div><div class="a ui" style="left:196px;top:658px;font-size:12.5px"><span class="uc">唯品会（中国）有限公司</span></div><div class="a ui" style="left:357px;top:658px;font-size:12.5px;width:203px;text-align:right">0</div><div class="a ui" style="left:566px;top:658px;font-size:12.5px;width:208px;text-align:right">48,496,582.13</div><div class="a ui" style="left:780px;top:658px;font-size:12.5px;width:194px;text-align:right">134,345,040.03</div><div class="a ui" style="left:980px;top:658px;font-size:12.5px;width:191px;text-align:right">0</div><div class="a ui" style="left:1177px;top:658px;font-size:12.5px;width:196px;text-align:right">0.361</div><div class="a " style="left:78px;top:676px;width:1301px;height:20px;background:#fff"></div><div class="a " style="left:1379px;top:696px;width:179px;height:1px;background:#eeeeee"></div><div class="a " style="left:48px;top:676px;width:30px;height:20px;background:#f7f7f7"></div><div class="a " style="left:48px;top:696px;width:30px;height:1px;background:#707070"></div><div class="a " style="left:78px;top:676px;width:1px;height:21px;background:#6a6a6a"></div><div class="a ui" style="left:53px;top:679px;font-size:13px">4</div><div class="a ui" style="left:84px;top:679px;font-size:12.5px">DH09</div><div class="a ui" style="left:196px;top:679px;font-size:12.5px">HLA<span class="uc">唯品会</span>24.1.5<span class="uc">（广州）</span></div><div class="a ui" style="left:357px;top:679px;font-size:12.5px;width:203px;text-align:right">3,558.04</div><div class="a ui" style="left:566px;top:679px;font-size:12.5px;width:208px;text-align:right">508</div><div class="a ui" style="left:780px;top:679px;font-size:12.5px;width:194px;text-align:right">116,058,532.95</div><div class="a ui" style="left:980px;top:679px;font-size:12.5px;width:191px;text-align:right">0</div><div class="a ui" style="left:1177px;top:679px;font-size:12.5px;width:196px;text-align:right">0</div><div class="a " style="left:78px;top:697px;width:1301px;height:20px;background:#dfeaf6"></div><div class="a " style="left:1379px;top:717px;width:179px;height:1px;background:#eeeeee"></div><div class="a " style="left:48px;top:697px;width:30px;height:20px;background:#f7f7f7"></div><div class="a " style="left:48px;top:717px;width:30px;height:1px;background:#707070"></div><div class="a " style="left:78px;top:697px;width:1px;height:21px;background:#6a6a6a"></div><div class="a ui" style="left:53px;top:700px;font-size:13px">5</div><div class="a ui" style="left:84px;top:700px;font-size:12.5px">DHWP</div><div class="a ui" style="left:196px;top:700px;font-size:12.5px">HLA<span class="uc">唯品会</span>23.12.5<span class="uc">（广州）</span></div><div class="a ui" style="left:357px;top:700px;font-size:12.5px;width:203px;text-align:right">2,345.38</div><div class="a ui" style="left:566px;top:700px;font-size:12.5px;width:208px;text-align:right">0</div><div class="a ui" style="left:780px;top:700px;font-size:12.5px;width:194px;text-align:right">93,203,764.02</div><div class="a ui" style="left:980px;top:700px;font-size:12.5px;width:191px;text-align:right">0</div><div class="a ui" style="left:1177px;top:700px;font-size:12.5px;width:196px;text-align:right">0</div><div class="a " style="left:78px;top:718px;width:1301px;height:20px;background:#fff"></div><div class="a " style="left:1379px;top:738px;width:179px;height:1px;background:#eeeeee"></div><div class="a " style="left:48px;top:718px;width:30px;height:20px;background:#f7f7f7"></div><div class="a " style="left:48px;top:738px;width:30px;height:1px;background:#707070"></div><div class="a " style="left:78px;top:718px;width:1px;height:21px;background:#6a6a6a"></div><div class="a ui" style="left:53px;top:721px;font-size:13px">6</div><div class="a ui" style="left:84px;top:721px;font-size:12.5px">DH47</div><div class="a ui" style="left:196px;top:721px;font-size:12.5px">HLA<span class="uc">唯品会</span>24.3.12<span class="uc">（广州）</span></div><div class="a ui" style="left:357px;top:721px;font-size:12.5px;width:203px;text-align:right">5,402,531.3</div><div class="a ui" style="left:566px;top:721px;font-size:12.5px;width:208px;text-align:right">127.63</div><div class="a ui" style="left:780px;top:721px;font-size:12.5px;width:194px;text-align:right">62,421,964.44</div><div class="a ui" style="left:980px;top:721px;font-size:12.5px;width:191px;text-align:right">0.0865</div><div class="a ui" style="left:1177px;top:721px;font-size:12.5px;width:196px;text-align:right">0</div><div class="a " style="left:78px;top:739px;width:1301px;height:20px;background:#dfeaf6"></div><div class="a " style="left:1379px;top:759px;width:179px;height:1px;background:#eeeeee"></div><div class="a " style="left:48px;top:739px;width:30px;height:20px;background:#f7f7f7"></div><div class="a " style="left:48px;top:759px;width:30px;height:1px;background:#707070"></div><div class="a " style="left:78px;top:739px;width:1px;height:21px;background:#6a6a6a"></div><div class="a ui" style="left:53px;top:742px;font-size:13px">7</div><div class="a ui" style="left:84px;top:742px;font-size:12.5px">DH60</div><div class="a ui" style="left:196px;top:742px;font-size:12.5px">HLA<span class="uc">唯品会</span>24.4.12<span class="uc">（广州）</span></div><div class="a ui" style="left:357px;top:742px;font-size:12.5px;width:203px;text-align:right">23,608,007.06</div><div class="a ui" style="left:566px;top:742px;font-size:12.5px;width:208px;text-align:right">1,347.53</div><div class="a ui" style="left:780px;top:742px;font-size:12.5px;width:194px;text-align:right">61,108,376.96</div><div class="a ui" style="left:980px;top:742px;font-size:12.5px;width:191px;text-align:right">0.3863</div><div class="a ui" style="left:1177px;top:742px;font-size:12.5px;width:196px;text-align:right">0</div><div class="a " style="left:78px;top:760px;width:1301px;height:20px;background:#fff"></div><div class="a " style="left:1379px;top:780px;width:179px;height:1px;background:#eeeeee"></div><div class="a " style="left:48px;top:760px;width:30px;height:20px;background:#f7f7f7"></div><div class="a " style="left:48px;top:780px;width:30px;height:1px;background:#707070"></div><div class="a " style="left:78px;top:760px;width:1px;height:21px;background:#6a6a6a"></div><div class="a ui" style="left:53px;top:763px;font-size:13px">8</div><div class="a ui" style="left:84px;top:763px;font-size:12.5px">DYC6</div><div class="a ui" style="left:196px;top:763px;font-size:12.5px"><span class="uc">英氏京东自营店（新）</span></div><div class="a ui" style="left:357px;top:763px;font-size:12.5px;width:203px;text-align:right">3,537,944.3</div><div class="a ui" style="left:566px;top:763px;font-size:12.5px;width:208px;text-align:right">5,733,198.68</div><div class="a ui" style="left:780px;top:763px;font-size:12.5px;width:194px;text-align:right">54,145,631.95</div><div class="a ui" style="left:980px;top:763px;font-size:12.5px;width:191px;text-align:right">0.0653</div><div class="a ui" style="left:1177px;top:763px;font-size:12.5px;width:196px;text-align:right">0.1059</div><div class="a " style="left:78px;top:781px;width:1301px;height:20px;background:#dfeaf6"></div><div class="a " style="left:1379px;top:801px;width:179px;height:1px;background:#eeeeee"></div><div class="a " style="left:48px;top:781px;width:30px;height:20px;background:#f7f7f7"></div><div class="a " style="left:48px;top:801px;width:30px;height:1px;background:#707070"></div><div class="a " style="left:78px;top:781px;width:1px;height:21px;background:#6a6a6a"></div><div class="a ui" style="left:53px;top:784px;font-size:13px">9</div><div class="a ui" style="left:84px;top:784px;font-size:12.5px">DHYM</div><div class="a ui" style="left:196px;top:784px;font-size:12.5px">HLA<span class="uc">唯品会</span>24.10.12<span class="uc">（男装）</span></div><div class="a ui" style="left:357px;top:784px;font-size:12.5px;width:203px;text-align:right">0</div><div class="a ui" style="left:566px;top:784px;font-size:12.5px;width:208px;text-align:right">19,387,354.82</div><div class="a ui" style="left:780px;top:784px;font-size:12.5px;width:194px;text-align:right">52,393,292.7</div><div class="a ui" style="left:980px;top:784px;font-size:12.5px;width:191px;text-align:right">0</div><div class="a ui" style="left:1177px;top:784px;font-size:12.5px;width:196px;text-align:right">0.37</div><div class="a " style="left:78px;top:612px;width:112px;height:22px;border:2px solid #111;background:#6aaae4"></div><div class="a ui" style="left:84px;top:616px;font-size:12.5px;color:#fff">H5LX</div><div class="a " style="left:1558px;top:584px;width:16px;height:217px;background:#f7f7f7"></div><div class="a " style="left:1559px;top:601px;width:14px;height:17px;background:#cdd0cd"></div><svg class="a" style="left:1561px;top:588px;" width="10" height="6" viewBox="0 0 10 6"><path d="M1 5l4-4 4 4" fill="none" stroke="#555" stroke-width="1.4"/></svg><svg class="a" style="left:1561px;top:790px;" width="10" height="6" viewBox="0 0 10 6"><path d="M1 1l4 4 4-4" fill="none" stroke="#555" stroke-width="1.4"/></svg><svg class="a" style="left:1577px;top:592px;" width="17" height="17" viewBox="0 0 17 17"><rect x="4" y="1" width="12" height="12" fill="#8fd0f5" stroke="#1a8ad4" stroke-width="1.3"/><path d="M9 1v6h7" fill="none" stroke="#1a8ad4" stroke-width="1.3"/><circle cx="4" cy="13" r="2.5" fill="#1a8ad4"/></svg><div class="a ui" style="left:1595px;top:610px;font-size:12.5px;transform:rotate(90deg);transform-origin:0 0"><span class="uc">面板</span></div><svg class="a" style="left:1577px;top:650px;" width="15" height="14" viewBox="0 0 15 14"><rect x="1" y="1" width="13" height="12" fill="#fff" stroke="#1a8ad4" stroke-width="1.2"/><path d="M1 3.5h13" stroke="#1a8ad4" stroke-width="2"/><path d="M3 6h2M7 6h2M11 6h2M4 8h2M9 8h2M3 10h2M7 10h2M11 10h2" stroke="#6fb6e8" stroke-width="1.2"/></svg><svg class="a" style="left:1577px;top:672px;" width="15" height="15" viewBox="0 0 15 15"><circle cx="7.5" cy="7.5" r="6.3" fill="none" stroke="#1a8ad4" stroke-width="1.3"/><circle cx="5.5" cy="5.5" r="1" fill="#1a8ad4"/><circle cx="9.5" cy="5.5" r="1" fill="#1a8ad4"/><circle cx="5.5" cy="9.5" r="1" fill="#1a8ad4"/><circle cx="9.5" cy="9.5" r="1" fill="#1a8ad4"/></svg><svg class="a" style="left:1577px;top:694px;" width="15" height="16" viewBox="0 0 15 16"><rect x="1" y="5" width="13" height="10" fill="none" stroke="#1a8ad4" stroke-width="1.2"/><path d="M1 8h13M1 11.5h13M5 5v10M9.5 5v10" stroke="#1a8ad4" stroke-width="1"/><path d="M7.5 0v6" stroke="#f68a1e" stroke-width="1.5"/><path d="M6 7h3v8H6z" fill="#f8b060"/></svg><svg class="a" style="left:1577px;top:716px;" width="15" height="15" viewBox="0 0 15 15"><rect x="1" y="1" width="13" height="12" fill="none" stroke="#1a8ad4" stroke-width="1.3"/><path d="M1 4h9v4H1z" fill="#6fb6e8"/><path d="M9 10h5M9 8.5v3M14 8.5v3" stroke="#1a8ad4" stroke-width="1"/></svg><svg class="a" style="left:1577px;top:737px;" width="15" height="16" viewBox="0 0 15 16"><circle cx="4" cy="4" r="3" fill="#1a8ad4"/><circle cx="11" cy="4" r="3" fill="#1a8ad4"/><circle cx="4" cy="11.5" r="3" fill="#1a8ad4"/><circle cx="11" cy="11.5" r="3" fill="#f68a1e"/><path d="M2.5 4h3M9.5 4h3M11 2.5v3M2.5 10l3 3M5.5 10l-3 3M9.5 11.5h3" stroke="#fff" stroke-width="1"/></svg><svg class="a" style="left:1577px;top:815px;" width="16" height="17" viewBox="0 0 16 17"><rect x="1" y="3" width="4" height="13" rx="1" fill="#1a8ad4"/><path d="M5 14.5h10" stroke="#1a8ad4" stroke-width="2"/><path d="M7 9a4.5 4.5 0 0 1 7-3.5" fill="none" stroke="#1a8ad4" stroke-width="1.5"/><path d="M12 2.5l3 3-3.5 1.5z" fill="#1a8ad4"/></svg><div class="a " style="left:24px;top:801px;width:1552px;height:32px;background:#f7f7f7"></div><div class="a " style="left:24px;top:833px;width:1576px;height:1px;background:#dcdcdc"></div><svg class="a" style="left:59px;top:808px;" width="16" height="17" viewBox="0 0 16 17"><path d="M2.5 9.5a5.5 5.5 0 0 1 9-5.5" fill="none" stroke="#1a8ad4" stroke-width="1.8"/><path d="M13.5 7.5a5.5 5.5 0 0 1-9 5.5" fill="none" stroke="#1a8ad4" stroke-width="1.8"/><path d="M9.5 1.5l4 1.5-2.5 3.5z M6.5 15.5l-4-1.5 2.5-3.5z" fill="#1a8ad4"/></svg><div class="a ui" style="left:78px;top:810px;font-size:12.5px"><span class="uc">刷新</span></div><svg class="a" style="left:118px;top:816px;" width="8" height="5" viewBox="0 0 8 5"><path d="M0 0h8L4 4.5z" fill="#222"/></svg><svg class="a" style="left:135px;top:810px;" width="3" height="15" viewBox="0 0 3 15"><rect x="0.5" y="0" width="2" height="2" fill="#c4b9a4"/><rect x="0.5" y="4" width="2" height="2" fill="#c4b9a4"/><rect x="0.5" y="8" width="2" height="2" fill="#c4b9a4"/><rect x="0.5" y="12" width="2" height="2" fill="#c4b9a4"/></svg><svg class="a" style="left:145px;top:808px;" width="16" height="16" viewBox="0 0 16 16"><circle cx="8" cy="8" r="6.8" fill="none" stroke="#a6a6a6" stroke-width="1.2"/><path d="M4.8 8.2l2.3 2.3 4.2-4.5" fill="none" stroke="#a6a6a6" stroke-width="1.2"/></svg><div class="a ui" style="left:166px;top:810px;font-size:12.5px;color:#a6a6a6"><span class="uc">保存</span></div><svg class="a" style="left:204px;top:816px;" width="8" height="5" viewBox="0 0 8 5"><path d="M0 0h8L4 4.5z" fill="#707070"/></svg><svg class="a" style="left:220px;top:810px;" width="14" height="14" viewBox="0 0 14 14"><rect x="1" y="1" width="12" height="12" fill="none" stroke="#a6a6a6" stroke-width="1.1"/><path d="M4 4l6 6M10 4l-6 6" stroke="#a6a6a6" stroke-width="1"/></svg><div class="a ui" style="left:239px;top:810px;font-size:12.5px;color:#a6a6a6"><span class="uc">取消</span></div><div class="a " style="left:273px;top:804px;width:1px;height:27px;background:#888"></div><svg class="a" style="left:283px;top:809px;" width="17" height="15" viewBox="0 0 17 15"><path d="M1 2h13M1 6h9M1 10h6M1 14h9" stroke="#1a8ad4" stroke-width="1.6"/><path d="M10 13l5-5" stroke="#1a8ad4" stroke-width="2"/></svg><svg class="a" style="left:306px;top:809px;" width="17" height="15" viewBox="0 0 17 15"><path d="M1 2h13M1 6h7M1 10h7M1 14h13M12 6v8M8 10h8" stroke="#8a8a8a" stroke-width="1.5"/></svg><svg class="a" style="left:330px;top:809px;" width="17" height="15" viewBox="0 0 17 15"><path d="M1 2h13M1 14h13M1 8h3M13 8h2" stroke="#8a8a8a" stroke-width="1.4"/><circle cx="8.5" cy="8" r="3.5" fill="none" stroke="#8a8a8a" stroke-width="1.2"/><path d="M8.5 6v4M6.5 8h4" stroke="#8a8a8a" stroke-width="1"/></svg><svg class="a" style="left:354px;top:809px;" width="17" height="15" viewBox="0 0 17 15"><path d="M1 2h13M1 6h6M1 10h6M1 14h13M9 8h6" stroke="#8a8a8a" stroke-width="1.5"/></svg><svg class="a" style="left:379px;top:810px;" width="3" height="15" viewBox="0 0 3 15"><rect x="0.5" y="0" width="2" height="2" fill="#c4b9a4"/><rect x="0.5" y="4" width="2" height="2" fill="#c4b9a4"/><rect x="0.5" y="8" width="2" height="2" fill="#c4b9a4"/><rect x="0.5" y="12" width="2" height="2" fill="#c4b9a4"/></svg><svg class="a" style="left:386px;top:809px;" width="15" height="15" viewBox="0 0 15 15"><path d="M2 1v13" stroke="#8a8a8a" stroke-width="1.6"/><path d="M12 1l-6 6.5 6 6.5" fill="none" stroke="#8a8a8a" stroke-width="1.6"/></svg><svg class="a" style="left:410px;top:809px;" width="12" height="15" viewBox="0 0 12 15"><path d="M9 1l-6 6.5 6 6.5" fill="none" stroke="#8a8a8a" stroke-width="1.6"/></svg><svg class="a" style="left:434px;top:809px;" width="12" height="15" viewBox="0 0 12 15"><path d="M3 1l6 6.5-6 6.5" fill="none" stroke="#1a8ad4" stroke-width="1.7"/></svg><svg class="a" style="left:456px;top:809px;" width="15" height="15" viewBox="0 0 15 15"><path d="M12 1v13" stroke="#1a8ad4" stroke-width="1.7"/><path d="M2 1l6 6.5-6 6.5" fill="none" stroke="#1a8ad4" stroke-width="1.7"/></svg><svg class="a" style="left:479px;top:809px;" width="15" height="15" viewBox="0 0 15 15"><path d="M1 4V1h3M11 1h3v3M14 11v3h-3M4 14H1v-3" fill="none" stroke="#1a8ad4" stroke-width="1.5"/><rect x="4.5" y="4.5" width="6" height="6" fill="none" stroke="#1a8ad4" stroke-width="1.4"/></svg><svg class="a" style="left:501px;top:810px;" width="3" height="15" viewBox="0 0 3 15"><rect x="0.5" y="0" width="2" height="2" fill="#c4b9a4"/><rect x="0.5" y="4" width="2" height="2" fill="#c4b9a4"/><rect x="0.5" y="8" width="2" height="2" fill="#c4b9a4"/><rect x="0.5" y="12" width="2" height="2" fill="#c4b9a4"/></svg><svg class="a" style="left:516px;top:808px;" width="15" height="17" viewBox="0 0 15 17"><path d="M7.5 2v10M3.5 6l4-4 4 4" fill="none" stroke="#1a8ad4" stroke-width="1.7"/><path d="M1 11v4.5h13V11" fill="none" stroke="#1a8ad4" stroke-width="1.5"/></svg><div class="a ui" style="left:536px;top:810px;font-size:12.5px"><span class="uc">导出数据</span>...</div><svg class="a" style="left:606px;top:816px;" width="8" height="5" viewBox="0 0 8 5"><path d="M0 0h8L4 4.5z" fill="#222"/></svg><svg class="a" style="left:623px;top:810px;" width="3" height="15" viewBox="0 0 3 15"><rect x="0.5" y="0" width="2" height="2" fill="#c4b9a4"/><rect x="0.5" y="4" width="2" height="2" fill="#c4b9a4"/><rect x="0.5" y="8" width="2" height="2" fill="#c4b9a4"/><rect x="0.5" y="12" width="2" height="2" fill="#c4b9a4"/></svg><svg class="a" style="left:630px;top:809px;" width="16" height="16" viewBox="0 0 16 16"><path d="M8 0.8l1.6 1.9 2.4-.6.6 2.4 2.4.8-.9 2.3 1.5 2-2 1.4.2 2.5-2.5.1-1 2.3-2.3-1-2.3 1-1-2.3-2.5-.1.2-2.5-2-1.4 1.5-2-.9-2.3 2.4-.8.6-2.4 2.4.6z" fill="#1a8ad4"/><circle cx="8" cy="8" r="2.8" fill="#8fd0f5"/></svg><div class="a " style="left:654px;top:806px;width:53px;height:22px;background:#fff;border:1px solid #8a8a8a"></div><div class="a ui" style="left:658px;top:810px;font-size:12.5px">200</div><svg class="a" style="left:713px;top:808px;" width="17" height="17" viewBox="0 0 17 17"><path d="M1 1h15" stroke="#1a8ad4" stroke-width="1.5"/><path d="M4 3.5l4.5 5 4.5-5M8.5 8.5v5" fill="none" stroke="#1a8ad4" stroke-width="1.5"/><path d="M1 10v5.5h15V10" fill="none" stroke="#1a8ad4" stroke-width="1.3"/></svg><div class="a ui" style="left:737px;top:810px;font-size:12.5px">342</div><svg class="a" style="left:765px;top:810px;" width="3" height="15" viewBox="0 0 3 15"><rect x="0.5" y="0" width="2" height="2" fill="#c4b9a4"/><rect x="0.5" y="4" width="2" height="2" fill="#c4b9a4"/><rect x="0.5" y="8" width="2" height="2" fill="#c4b9a4"/><rect x="0.5" y="12" width="2" height="2" fill="#c4b9a4"/></svg><div class="a ui" style="left:793px;top:808px;font-size:11px;color:#555">···</div><div class="a ui" style="left:812px;top:810px;font-size:12.5px">200 <span class="uc">行已获取</span> - 421ms (1ms <span class="uc">获取</span>), 2025-10-21 20:24:04</div><div class="a " style="left:0px;top:834px;width:1600px;height:26px;background:#f7f7f7"></div><div class="a " style="left:779px;top:837px;width:1px;height:20px;background:#c8c8c8"></div><div class="a " style="left:815px;top:837px;width:1px;height:20px;background:#c8c8c8"></div><div class="a " style="left:842px;top:837px;width:1px;height:20px;background:#c8c8c8"></div><div class="a " style="left:976px;top:837px;width:1px;height:20px;background:#c8c8c8"></div><div class="a " style="left:1103px;top:837px;width:1px;height:20px;background:#c8c8c8"></div><div class="a " style="left:1231px;top:837px;width:1px;height:20px;background:#c8c8c8"></div><div class="a ui" style="left:786px;top:838px;font-size:12.5px">CST</div><div class="a ui" style="left:821px;top:838px;font-size:12.5px">zh</div><div class="a ui" style="left:850px;top:838px;font-size:12.5px"><span class="uc">可写</span></div><div class="a ui" style="left:983px;top:838px;font-size:12.5px"><span class="uc">智能插入</span></div><div class="a ui" style="left:1111px;top:838px;font-size:12.5px">1813 : 1 : 76174</div><div class="a ui" style="left:1239px;top:838px;font-size:12.5px">Sel: 0 | 0</div><svg class="a" style="left:1315px;top:839px;" width="3" height="15" viewBox="0 0 3 15"><rect x="0.5" y="0" width="2" height="2" fill="#c4b9a4"/><rect x="0.5" y="4" width="2" height="2" fill="#c4b9a4"/><rect x="0.5" y="8" width="2" height="2" fill="#c4b9a4"/><rect x="0.5" y="12" width="2" height="2" fill="#c4b9a4"/></svg><svg class="a" style="left:1584px;top:109px;" width="10" height="7" viewBox="0 0 10 7"><path d="M1 6l4-4 4 4" fill="none" stroke="#555" stroke-width="1.4"/></svg><svg class="a" style="left:1584px;top:495px;" width="10" height="7" viewBox="0 0 10 7"><path d="M1 1l4 4 4-4" fill="none" stroke="#555" stroke-width="1.4"/></svg><svg class="a" style="left:118px;top:510px;" width="8" height="11" viewBox="0 0 8 11"><path d="M6 1L2 5.5 6 10" fill="none" stroke="#555" stroke-width="1.5"/></svg><svg class="a" style="left:1568px;top:510px;" width="8" height="11" viewBox="0 0 8 11"><path d="M2 1l4 4.5L2 10" fill="none" stroke="#555" stroke-width="1.5"/></svg><div class="a " style="left:0px;top:860px;width:1600px;height:40px;background:#000"></div><div class="a " style="left:294px;top:860px;width:48px;height:40px;background:#333"></div><div class="a " style="left:294px;top:898px;width:48px;height:2px;background:#76b9ed"></div><div class="a " style="left:1596px;top:860px;width:1px;height:40px;background:#555"></div><svg class="a" style="left:16px;top:872px;" width="17" height="17" viewBox="0 0 17 17"><path d="M0 2.3L6.8 1.4V8H0zM7.6 1.3L16.5 0v8H7.6zM0 8.8h6.8v6.6L0 14.5zM7.6 8.8h8.9V17l-8.9-1.3z" fill="#fff"/></svg><svg class="a" style="left:62px;top:869px;" width="20" height="20" viewBox="0 0 20 20"><circle cx="12" cy="8" r="5.8" fill="none" stroke="#fff" stroke-width="1.3"/><path d="M7.8 12.2L2 18" stroke="#fff" stroke-width="1.5"/></svg><svg class="a" style="left:111px;top:871px;" width="18" height="18" viewBox="0 0 18 18"><path d="M1 1.5h11M1 16.5h11" stroke="#fff" stroke-width="1.2"/><rect x="2.5" y="4.5" width="8" height="9" fill="none" stroke="#fff" stroke-width="1.2"/><path d="M15 1v16" stroke="#fff" stroke-width="1.2"/><rect x="13.5" y="6" width="3" height="3" fill="#fff"/></svg><svg class="a" style="left:158px;top:866px;" width="26" height="26" viewBox="0 0 26 26"><ellipse cx="13" cy="13.5" rx="11.5" ry="6" transform="rotate(-30 13 13.5)" fill="none" stroke="#f2c200" stroke-width="1.8"/><circle cx="13.5" cy="14" r="8" fill="#28a8e8"/><path d="M7.5 14h12c0-3.5-2.5-6-6-6s-6 2.5-6 6c0 3.5 2.5 6 6 6 2.5 0 4.5-1.2 5.5-3" fill="none" stroke="#fff" stroke-width="2.2"/><path d="M8 13h11" stroke="#28a8e8" stroke-width="0"/></svg><svg class="a" style="left:208px;top:870px;" width="24" height="20" viewBox="0 0 24 20"><path d="M1 2h8l2 2h12v15H1z" fill="#f6d365"/><path d="M1 5h22v14H1z" fill="#fbe08e"/><path d="M7 12h10v7h-3v-3.5h-4V19H7z" fill="#2a8fe0"/><path d="M4 19h16" stroke="#2a8fe0" stroke-width="0"/></svg><svg class="a" style="left:257px;top:868px;" width="24" height="24" viewBox="0 0 24 24"><circle cx="12" cy="12" r="10.8" fill="#fff" stroke="#4ec0c8" stroke-width="1.8"/><path d="M7.5 21.5L9.5 14.5Q12 16.5 14.5 14L16.5 17 15.5 21.5Z" fill="#3a2e28"/><path d="M4.8 15Q5 8 10 5.5Q14 4 17 6" fill="none" stroke="#3a2e28" stroke-width="0.9"/><path d="M4.3 10.5L6.5 9.5 5.8 16.5 4.5 15z" fill="#3a2e28"/><circle cx="10.3" cy="8" r="0.8" fill="#3a2e28"/><ellipse cx="15.6" cy="8.6" rx="1.9" ry="1.1" fill="#3a2e28"/><path d="M14.5 12.5L16.5 11.5 17 15 15 16z" fill="#3a2e28"/></svg><svg class="a" style="left:306px;top:868px;" width="24" height="24" viewBox="0 0 24 24"><circle cx="12" cy="12" r="10.8" fill="#fff" stroke="#4ec0c8" stroke-width="1.8"/><path d="M7.5 21.5L9.5 14.5Q12 16.5 14.5 14L16.5 17 15.5 21.5Z" fill="#3a2e28"/><path d="M4.8 15Q5 8 10 5.5Q14 4 17 6" fill="none" stroke="#3a2e28" stroke-width="0.9"/><path d="M4.3 10.5L6.5 9.5 5.8 16.5 4.5 15z" fill="#3a2e28"/><circle cx="10.3" cy="8" r="0.8" fill="#3a2e28"/><ellipse cx="15.6" cy="8.6" rx="1.9" ry="1.1" fill="#3a2e28"/><path d="M14.5 12.5L16.5 11.5 17 15 15 16z" fill="#3a2e28"/></svg><svg class="a" style="left:1347px;top:876px;" width="14" height="8" viewBox="0 0 14 8"><path d="M1 7l6-6 6 6" fill="none" stroke="#fff" stroke-width="1.3"/></svg><svg class="a" style="left:1371px;top:871px;" width="16" height="18" viewBox="0 0 16 18"><rect x="3.5" y="1" width="5" height="4" fill="none" stroke="#fff" stroke-width="1"/><rect x="1.5" y="5" width="9" height="12" rx="1" fill="none" stroke="#fff" stroke-width="1.1"/><path d="M9 15l2 2 4-4" fill="none" stroke="#bbb" stroke-width="1"/></svg><svg class="a" style="left:1393px;top:873px;" width="18" height="16" viewBox="0 0 18 16"><rect x="4.5" y="1.5" width="12" height="9" fill="none" stroke="#fff" stroke-width="1.1"/><rect x="0.5" y="0.5" width="4" height="4" fill="none" stroke="#fff" stroke-width="1"/><path d="M10.5 10.5v3M6 14h9M2 4.5v7h3" fill="none" stroke="#fff" stroke-width="1.1"/></svg><svg class="a" style="left:1417px;top:873px;" width="18" height="15" viewBox="0 0 18 15"><path d="M1 5h3l4-4v13l-4-4H1z" fill="none" stroke="#fff" stroke-width="1.1"/><path d="M10 5a3.5 3.5 0 0 1 0 5M12.5 3a6.5 6.5 0 0 1 0 9M15 1a9.5 9.5 0 0 1 0 13" fill="none" stroke="#fff" stroke-width="1.1"/></svg><div class="a ui" style="left:1443px;top:871px;color:#fff;font-size:13.5px">ENG</div><div class="a ui" style="left:1495px;top:863px;color:#fff;font-size:13px">20:24</div><div class="a ui" style="left:1477px;top:881px;color:#fff;font-size:13px">2025/10/21</div><svg class="a" style="left:1558px;top:871px;" width="26" height="24" viewBox="0 0 26 24"><path d="M1 1h16v13H8l-4 4v-4H1z" fill="#fff"/><path d="M4 4.5h10M4 7.5h10M4 10.5h7" stroke="#000" stroke-width="1.2"/><circle cx="17" cy="16" r="6.5" fill="#3a3a3a" stroke="#000" stroke-width="1"/><text x="17" y="20" font-size="10" font-weight="bold" font-family="Liberation Sans" fill="#fff" text-anchor="middle">1</text></svg><svg class="a" style="left:0;top:0;pointer-events:none" width="1600" height="860"><text transform="translate(-214,217) rotate(-43.6)" font-size="18" font-family="Liberation Sans" fill="#000" fill-opacity="0.11" textLength="186" lengthAdjust="spacingAndGlyphs">audit审计01(Audit1)</text><text transform="translate(-202,239) rotate(-44.5)" font-size="18" font-family="Liberation Sans" fill="#000" fill-opacity="0.11" textLength="200" lengthAdjust="spacingAndGlyphs">audit-172.18.210.237</text><text transform="translate(86,217) rotate(-43.6)" font-size="18" font-family="Liberation Sans" fill="#000" fill-opacity="0.11" textLength="186" lengthAdjust="spacingAndGlyphs">audit审计01(Audit1)</text><text transform="translate(98,239) rotate(-44.5)" font-size="18" font-family="Liberation Sans" fill="#000" fill-opacity="0.11" textLength="200" lengthAdjust="spacingAndGlyphs">audit-172.18.210.237</text><text transform="translate(386,217) rotate(-43.6)" font-size="18" font-family="Liberation Sans" fill="#000" fill-opacity="0.11" textLength="186" lengthAdjust="spacingAndGlyphs">audit审计01(Audit1)</text><text transform="translate(398,239) rotate(-44.5)" font-size="18" font-family="Liberation Sans" fill="#000" fill-opacity="0.11" textLength="200" lengthAdjust="spacingAndGlyphs">audit-172.18.210.237</text><text transform="translate(686,217) rotate(-43.6)" font-size="18" font-family="Liberation Sans" fill="#000" fill-opacity="0.11" textLength="186" lengthAdjust="spacingAndGlyphs">audit审计01(Audit1)</text><text transform="translate(698,239) rotate(-44.5)" font-size="18" font-family="Liberation Sans" fill="#000" fill-opacity="0.11" textLength="200" lengthAdjust="spacingAndGlyphs">audit-172.18.210.237</text><text transform="translate(986,217) rotate(-43.6)" font-size="18" font-family="Liberation Sans" fill="#000" fill-opacity="0.11" textLength="186" lengthAdjust="spacingAndGlyphs">audit审计01(Audit1)</text><text transform="translate(998,239) rotate(-44.5)" font-size="18" font-family="Liberation Sans" fill="#000" fill-opacity="0.11" textLength="200" lengthAdjust="spacingAndGlyphs">audit-172.18.210.237</text><text transform="translate(1286,217) rotate(-43.6)" font-size="18" font-family="Liberation Sans" fill="#000" fill-opacity="0.11" textLength="186" lengthAdjust="spacingAndGlyphs">audit审计01(Audit1)</text><text transform="translate(1298,239) rotate(-44.5)" font-size="18" font-family="Liberation Sans" fill="#000" fill-opacity="0.11" textLength="200" lengthAdjust="spacingAndGlyphs">audit-172.18.210.237</text><text transform="translate(1586,217) rotate(-43.6)" font-size="18" font-family="Liberation Sans" fill="#000" fill-opacity="0.11" textLength="186" lengthAdjust="spacingAndGlyphs">audit审计01(Audit1)</text><text transform="translate(1598,239) rotate(-44.5)" font-size="18" font-family="Liberation Sans" fill="#000" fill-opacity="0.11" textLength="200" lengthAdjust="spacingAndGlyphs">audit-172.18.210.237</text><text transform="translate(-215,517) rotate(-43.6)" font-size="18" font-family="Liberation Sans" fill="#000" fill-opacity="0.11" textLength="186" lengthAdjust="spacingAndGlyphs">audit审计01(Audit1)</text><text transform="translate(-203,539) rotate(-44.5)" font-size="18" font-family="Liberation Sans" fill="#000" fill-opacity="0.11" textLength="200" lengthAdjust="spacingAndGlyphs">audit-172.18.210.237</text><text transform="translate(85,517) rotate(-43.6)" font-size="18" font-family="Liberation Sans" fill="#000" fill-opacity="0.11" textLength="186" lengthAdjust="spacingAndGlyphs">audit审计01(Audit1)</text><text transform="translate(97,539) rotate(-44.5)" font-size="18" font-family="Liberation Sans" fill="#000" fill-opacity="0.11" textLength="200" lengthAdjust="spacingAndGlyphs">audit-172.18.210.237</text><text transform="translate(385,517) rotate(-43.6)" font-size="18" font-family="Liberation Sans" fill="#000" fill-opacity="0.11" textLength="186" lengthAdjust="spacingAndGlyphs">audit审计01(Audit1)</text><text transform="translate(397,539) rotate(-44.5)" font-size="18" font-family="Liberation Sans" fill="#000" fill-opacity="0.11" textLength="200" lengthAdjust="spacingAndGlyphs">audit-172.18.210.237</text><text transform="translate(685,517) rotate(-43.6)" font-size="18" font-family="Liberation Sans" fill="#000" fill-opacity="0.11" textLength="186" lengthAdjust="spacingAndGlyphs">audit审计01(Audit1)</text><text transform="translate(697,539) rotate(-44.5)" font-size="18" font-family="Liberation Sans" fill="#000" fill-opacity="0.11" textLength="200" lengthAdjust="spacingAndGlyphs">audit-172.18.210.237</text><text transform="translate(985,517) rotate(-43.6)" font-size="18" font-family="Liberation Sans" fill="#000" fill-opacity="0.11" textLength="186" lengthAdjust="spacingAndGlyphs">audit审计01(Audit1)</text><text transform="translate(997,539) rotate(-44.5)" font-size="18" font-family="Liberation Sans" fill="#000" fill-opacity="0.11" textLength="200" lengthAdjust="spacingAndGlyphs">audit-172.18.210.237</text><text transform="translate(1285,517) rotate(-43.6)" font-size="18" font-family="Liberation Sans" fill="#000" fill-opacity="0.11" textLength="186" lengthAdjust="spacingAndGlyphs">audit审计01(Audit1)</text><text transform="translate(1297,539) rotate(-44.5)" font-size="18" font-family="Liberation Sans" fill="#000" fill-opacity="0.11" textLength="200" lengthAdjust="spacingAndGlyphs">audit-172.18.210.237</text><text transform="translate(1585,517) rotate(-43.6)" font-size="18" font-family="Liberation Sans" fill="#000" fill-opacity="0.11" textLength="186" lengthAdjust="spacingAndGlyphs">audit审计01(Audit1)</text><text transform="translate(1597,539) rotate(-44.5)" font-size="18" font-family="Liberation Sans" fill="#000" fill-opacity="0.11" textLength="200" lengthAdjust="spacingAndGlyphs">audit-172.18.210.237</text><text transform="translate(-216,817) rotate(-43.6)" font-size="18" font-family="Liberation Sans" fill="#000" fill-opacity="0.11" textLength="186" lengthAdjust="spacingAndGlyphs">audit审计01(Audit1)</text><text transform="translate(-204,839) rotate(-44.5)" font-size="18" font-family="Liberation Sans" fill="#000" fill-opacity="0.11" textLength="200" lengthAdjust="spacingAndGlyphs">audit-172.18.210.237</text><text transform="translate(84,817) rotate(-43.6)" font-size="18" font-family="Liberation Sans" fill="#000" fill-opacity="0.11" textLength="186" lengthAdjust="spacingAndGlyphs">audit审计01(Audit1)</text><text transform="translate(96,839) rotate(-44.5)" font-size="18" font-family="Liberation Sans" fill="#000" fill-opacity="0.11" textLength="200" lengthAdjust="spacingAndGlyphs">audit-172.18.210.237</text><text transform="translate(384,817) rotate(-43.6)" font-size="18" font-family="Liberation Sans" fill="#000" fill-opacity="0.11" textLength="186" lengthAdjust="spacingAndGlyphs">audit审计01(Audit1)</text><text transform="translate(396,839) rotate(-44.5)" font-size="18" font-family="Liberation Sans" fill="#000" fill-opacity="0.11" textLength="200" lengthAdjust="spacingAndGlyphs">audit-172.18.210.237</text><text transform="translate(684,817) rotate(-43.6)" font-size="18" font-family="Liberation Sans" fill="#000" fill-opacity="0.11" textLength="186" lengthAdjust="spacingAndGlyphs">audit审计01(Audit1)</text><text transform="translate(696,839) rotate(-44.5)" font-size="18" font-family="Liberation Sans" fill="#000" fill-opacity="0.11" textLength="200" lengthAdjust="spacingAndGlyphs">audit-172.18.210.237</text><text transform="translate(984,817) rotate(-43.6)" font-size="18" font-family="Liberation Sans" fill="#000" fill-opacity="0.11" textLength="186" lengthAdjust="spacingAndGlyphs">audit审计01(Audit1)</text><text transform="translate(996,839) rotate(-44.5)" font-size="18" font-family="Liberation Sans" fill="#000" fill-opacity="0.11" textLength="200" lengthAdjust="spacingAndGlyphs">audit-172.18.210.237</text><text transform="translate(1284,817) rotate(-43.6)" font-size="18" font-family="Liberation Sans" fill="#000" fill-opacity="0.11" textLength="186" lengthAdjust="spacingAndGlyphs">audit审计01(Audit1)</text><text transform="translate(1296,839) rotate(-44.5)" font-size="18" font-family="Liberation Sans" fill="#000" fill-opacity="0.11" textLength="200" lengthAdjust="spacingAndGlyphs">audit-172.18.210.237</text><text transform="translate(1584,817) rotate(-43.6)" font-size="18" font-family="Liberation Sans" fill="#000" fill-opacity="0.11" textLength="186" lengthAdjust="spacingAndGlyphs">audit审计01(Audit1)</text><text transform="translate(1596,839) rotate(-44.5)" font-size="18" font-family="Liberation Sans" fill="#000" fill-opacity="0.11" textLength="200" lengthAdjust="spacingAndGlyphs">audit-172.18.210.237</text></svg></body></html>
